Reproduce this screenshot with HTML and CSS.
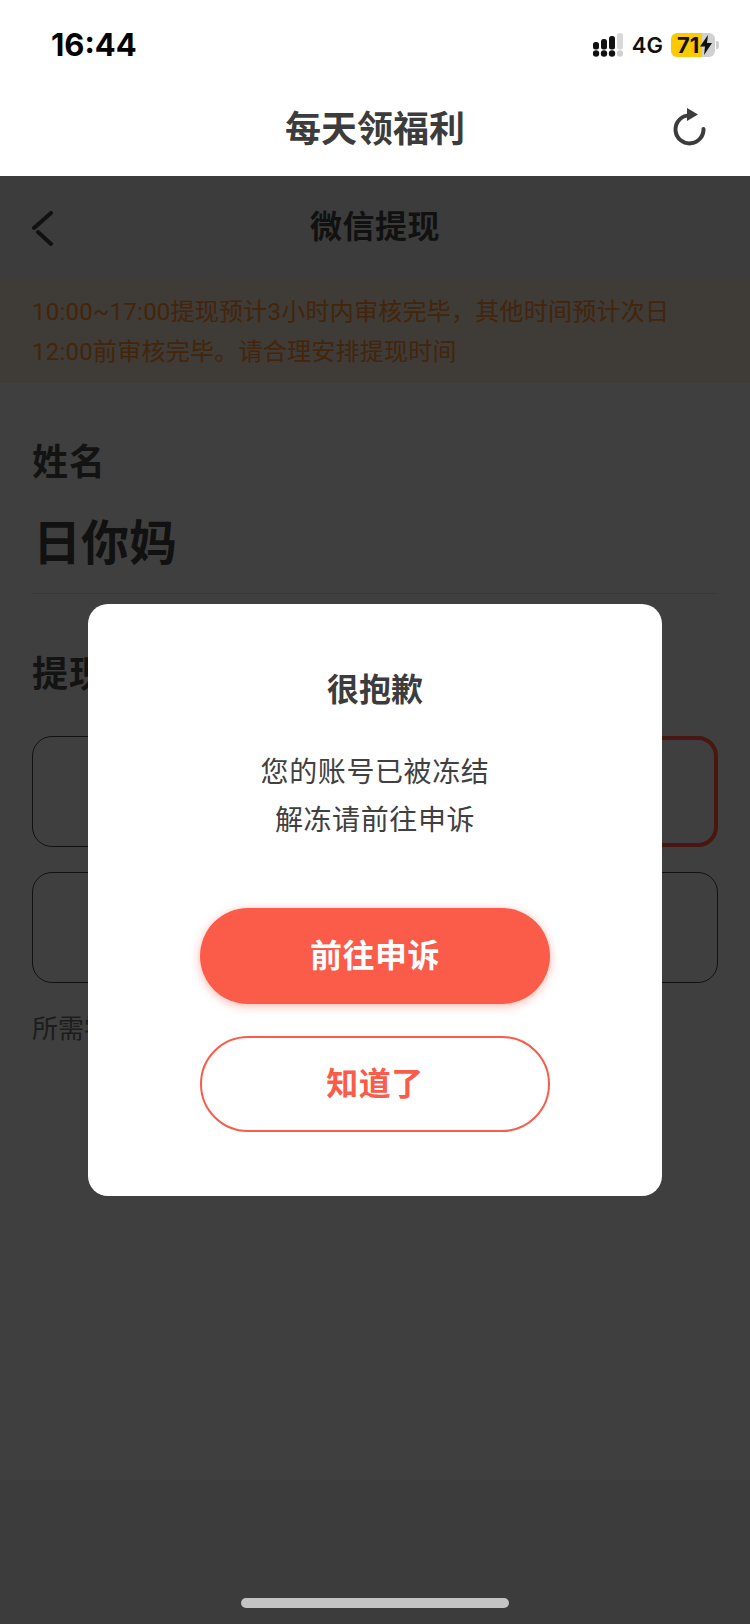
FILE: index.html
```html
<!doctype html>
<html lang="zh-CN">
    <head>
        <meta charset="utf-8" />
        <title>每天领福利</title>
        <link rel="stylesheet" href="styles.css">
    </head>
 <body>
    <div class="page">
        <!--top white part-->
        <div class="top">
            <div class="status">
                <span class="time">16:44</span>
                <div class="status-right">
                    <svg class="signal" width="30" height="24" viewBox="0 0 30 24">
                        <g fill="#111">
                            <circle cx="3" cy="20.500" r="3.200"/>
                            <circle cx="11" cy="20.500" r="3.200"/>
                            <circle cx="19" cy="20.500" r="3.200"/>
                            <rect x="0" y="9" width="6" height="7.500" rx="2.500"/>
                            <rect x="8" y="6" width="6" height="10.500" rx="2.500"/>
                            <rect x="16" y="3" width="6" height="13.500" rx="2.500"/>
                        </g>
                        <circle cx="27" cy="20.500" r="3.200" fill="#d0d0d0"/>
                        <rect x="24" y="0" width="6" height="16.500" rx="2.500" fill="#d8d8d8"/>
                    </svg>
                    <span class="net">4G</span>
                    <div class="battery">
                        <div class="battery-body">
                            <span class="battery-num">71</span>
                            <svg class="bolt" width="12" height="20" viewBox="0 0 12 20">
                                <path d="M8 0 L0 11.500 H5 L4 20 L12 8 H7 Z" fill="#111"/>
                            </svg>
                        </div>
                        <i class="battery-nub"></i>
                    </div>
                </div>
            </div>
            <div class="title-bar">
                <h1 class="title">每天领福利</h1>
                <svg class="refresh" width="36" height="40" viewBox="0 0 36 40">
                    <path d="M31.500 22 A14 14 0 1 1 15 8.600" fill="none" stroke="#3c3c3c" stroke-width="4" stroke-linecap="round"/>
                    <path d="M15 1 L26 7.500 L15 14 Z" fill="#3c3c3c"/>
                </svg>
            </div>
        </div>

        <!--dimmed page-->
        <div class="sub-nav">
            <svg class="back" width="24" height="36" viewBox="0 0 24 36">
                <path d="M19 2 L2 17 M6 21 L19 33" fill="none" stroke="#111" stroke-width="4" stroke-linecap="round"/>
            </svg>
            <div class="sub-title">微信提现</div>
        </div>
        <div class="notice">10:00~17:00提现预计3小时内审核完毕，其他时间预计次日<br>12:00前审核完毕。请合理安排提现时间</div>
        <div class="content">
            <div class="label">姓名</div>
            <div class="name">日你妈</div>
            <div class="label label-amount">提现金额</div>
            <div class="amounts">
                <div class="amount"></div>
                <div class="amount"></div>
                <div class="amount amount-on"></div>
                <div class="amount"></div>
                <div class="amount"></div>
                <div class="amount"></div>
            </div>
            <div class="need">所需零钱</div>
        </div>
        <div class="footer"><div class="home-bar"></div></div>

        <!--dialog-->
        <div class="dialog">
            <div class="dialog-title">很抱歉</div>
            <div class="dialog-text">您的账号已被冻结<br>解冻请前往申诉</div>
            <div class="btn btn-main">前往申诉</div>
            <div class="btn btn-line">知道了</div>
        </div>
    </div>
 </body>
</html>
```

FILE: styles.css
```css
*{
    margin:0;
    padding:0;
    box-sizing:border-box;
}
body{
    font-family:Inter,"Noto Sans CJK SC",sans-serif;
    background:#3f3f3f;
}
.page{
    position:relative;
    width:750px;
    height:1624px;
    display:flex;
    flex-direction:column;
    overflow:hidden;
}
.top{
    height:176px;
    background:#fff;
}
.status{
    height:84px;
    padding:28px 31px 0 51px;
    display:flex;
    justify-content:space-between;
}
.time{
    font-size:31px;
    line-height:33px;
    font-weight:700;
    color:#000;
}
.status-right{
    display:flex;
    align-items:flex-start;
    padding-top:5px;
}
.net{
    margin-left:9px;
    font-size:22px;
    line-height:24px;
    font-weight:600;
    color:#111;
}
.battery{
    margin-left:8px;
    display:flex;
    align-items:center;
}
.battery-body{
    width:44px;
    height:24px;
    border-radius:6px;
    background:linear-gradient(90deg,#fdc900 31px,#d0d0d0 31px);
    display:flex;
    align-items:center;
    padding-left:6px;
}
.battery-num{
    font-size:22px;
    line-height:24px;
    font-weight:700;
    color:#111;
    width:23px;
}
.battery-nub{
    display:block;
    width:3px;
    height:8px;
    margin-left:1px;
    background:#d0d0d0;
    border-radius:0 2px 2px 0;
}
.title-bar{
    position:relative;
    height:88px;
    display:flex;
    align-items:center;
    justify-content:center;
    padding-bottom:4px;
}
.title{
    font-size:36px;
    font-weight:700;
    color:#3c3c3c;
}
.refresh{
    position:absolute;
    right:42px;
    top:23px;
}
.sub-nav{
    position:relative;
    height:103px;
    background:#3c3c3c;
    padding-top:29px;
    text-align:center;
}
.back{
    position:absolute;
    left:32px;
    top:35px;
}
.sub-title{
    font-size:32px;
    line-height:44px;
    letter-spacing:.5px;
    font-weight:700;
    color:#111;
}
.notice{
    height:104px;
    padding:13px 32px 0;
    background:#3f3b36;
    font-family:Roboto,"Noto Sans CJK SC",sans-serif;
    font-size:24px;
    line-height:40px;
    letter-spacing:.25px;
    color:#43250b;
}
.content{
    flex:1;
    padding:55px 32px 0;
}
.label{
    font-size:36px;
    line-height:48px;
    letter-spacing:1px;
    font-weight:700;
    color:#131313;
}
.name{
    margin-top:25px;
    padding:0 1px 14px;
    height:83px;
    border-bottom:1px solid #393939;
    font-size:48px;
    line-height:64px;
    font-weight:700;
    color:#111;
}
.label-amount{
    margin-top:56px;
}
.amounts{
    margin-top:38px;
    display:grid;
    grid-template-columns:repeat(3,1fr);
    gap:25px 20px;
}
.amount{
    height:111px;
    border:1px solid #111;
    border-radius:20px;
}
.amount-on{
    border:4px solid #4a1710;
}
.need{
    margin-top:28px;
    font-size:26px;
    line-height:36px;
    color:#1c1c1c;
}
.footer{
    height:144px;
    padding-top:118px;
    background:#3c3c3c;
}
.home-bar{
    width:268px;
    height:10px;
    margin:0 auto;
    border-radius:5px;
    background:#c4c4c4;
}
.dialog{
    position:absolute;
    left:88px;
    top:604px;
    width:574px;
    height:592px;
    padding-top:62px;
    border-radius:20px;
    background:#fff;
    display:flex;
    flex-direction:column;
    align-items:center;
}
.dialog-title{
    font-size:32px;
    line-height:48px;
    font-weight:700;
    color:#3c3c3c;
}
.dialog-text{
    margin-top:34px;
    font-size:28px;
    line-height:48px;
    letter-spacing:.6px;
    text-align:center;
    color:#404040;
}
.btn{
    width:350px;
    height:96px;
    border-radius:48px;
    font-size:32px;
    line-height:92px;
    letter-spacing:.5px;
    font-weight:700;
    text-align:center;
}
.btn-main{
    margin-top:64px;
    background:#fb5b49;
    color:#fff;
    line-height:96px;
    box-shadow:0 2px 10px rgba(251,91,73,.45);
}
.btn-line{
    margin-top:32px;
    border:2px solid #fb5b49;
    color:#fb5b49;
}
```
